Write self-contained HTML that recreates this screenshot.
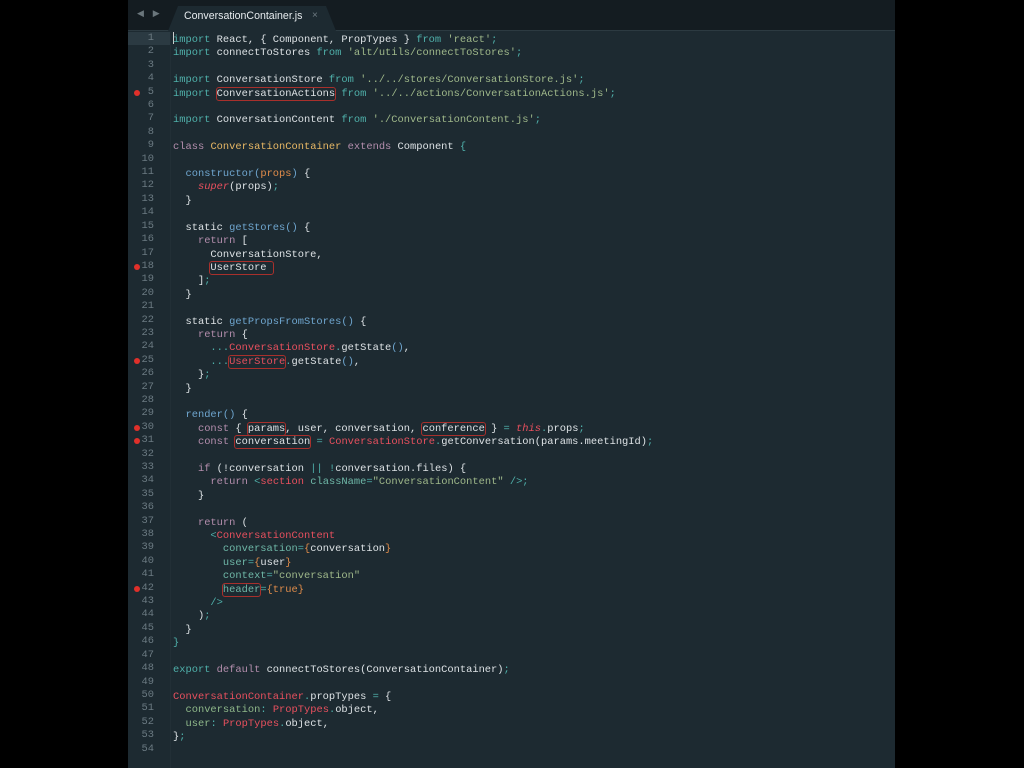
<!DOCTYPE html>
<html><head><meta charset="utf-8"><style>
html,body{margin:0;padding:0;background:#000;width:1024px;height:768px;overflow:hidden}
#ed{position:absolute;left:128px;top:0;width:767px;height:768px;background:#1d2a31}
#tabs{position:absolute;left:0;top:0;width:767px;height:30px;background:#141c21;border-bottom:1px solid #2c3a41}
#tabtitle{position:absolute;left:56px;top:10px;font:10.6px "Liberation Sans",sans-serif;color:#e6ebee}
#x{position:absolute;left:184px;top:10px;font:10px "Liberation Sans",sans-serif;color:#6f7c83}
#arr{position:absolute;left:9px;top:9px;font:9px "DejaVu Sans",sans-serif;color:#6a767c;letter-spacing:3px}
#gut{position:absolute;left:0;top:32px;width:26px;font:10.4px/13.4px "Liberation Mono",monospace;color:#6b7a82;text-align:right;white-space:pre}
#hl{position:absolute;left:0;top:31.5px;width:42px;height:13.4px;background:#2b3a42}
#sep{position:absolute;left:42px;top:31px;width:1px;height:737px;background:#222f36}
#code{position:absolute;left:45px;top:32px;font:10.4px/13.4px "Liberation Mono",monospace;color:#dde2e5;white-space:pre}
.dot{position:absolute;left:6px;width:6px;height:6px;border-radius:50%;background:#e0302a}
.k{color:#4fb0aa}.p{color:#b48ead}.s{color:#9fb88a}.r{color:#e8505e}.y{color:#e8b865}.b{color:#6fa6cf}.o{color:#e08c4a}.i{color:#e8505e;font-style:italic}.a{color:#6fb8a8}.g{color:#8fb88a}
.bx{outline:1px solid #a8302c;outline-offset:0;border-radius:2px}
.cur{display:inline-block;width:1px;height:12px;background:#ccc;vertical-align:-2px;margin-right:-1px}
</style></head><body>
<div id="ed">
<div id="tabs">
<div id="arr">◀ ▶</div>
<svg style="position:absolute;left:40px;top:5px" width="170" height="26"><polygon points="0,26 10,1 158,1 168,26" fill="#1d2a31"/></svg>
<div id="tabtitle">ConversationContainer.js</div>
<div id="x">×</div>
</div>
<div id="hl"></div>
<div id="sep"></div>
<div id="gut">1
2
3
4
5
6
7
8
9
10
11
12
13
14
15
16
17
18
19
20
21
22
23
24
25
26
27
28
29
30
31
32
33
34
35
36
37
38
39
40
41
42
43
44
45
46
47
48
49
50
51
52
53
54</div>
<div class="dot" style="top:90px"></div>
<div class="dot" style="top:264.2px"></div>
<div class="dot" style="top:358px"></div>
<div class="dot" style="top:425px"></div>
<div class="dot" style="top:438.4px"></div>
<div class="dot" style="top:585.8px"></div>
<div id="code"><span class="cur"></span><span class="k">import</span> React, { Component, PropTypes } <span class="k">from</span> <span class="s">'react'</span><span class="k">;</span>
<span class="k">import</span> connectToStores <span class="k">from</span> <span class="s">'alt/utils/connectToStores'</span><span class="k">;</span>

<span class="k">import</span> ConversationStore <span class="k">from</span> <span class="s">'../../stores/ConversationStore.js'</span><span class="k">;</span>
<span class="k">import</span> <span class="bx">ConversationActions</span> <span class="k">from</span> <span class="s">'../../actions/ConversationActions.js'</span><span class="k">;</span>

<span class="k">import</span> ConversationContent <span class="k">from</span> <span class="s">'./ConversationContent.js'</span><span class="k">;</span>

<span class="p">class</span> <span class="y">ConversationContainer</span> <span class="p">extends</span> Component <span class="k">{</span>

  <span class="b">constructor</span><span class="b">(</span><span class="o">props</span><span class="b">)</span> {
    <span class="i">super</span>(props)<span class="k">;</span>
  }

  static <span class="b">getStores</span><span class="b">()</span> {
    <span class="p">return</span> [
      ConversationStore,
      <span class="bx">UserStore </span>
    ]<span class="k">;</span>
  }

  static <span class="b">getPropsFromStores</span><span class="b">()</span> {
    <span class="p">return</span> {
      <span class="k">...</span><span class="r">ConversationStore</span><span class="k">.</span>getState<span class="b">()</span>,
      <span class="k">...</span><span class="r bx">UserStore</span><span class="k">.</span>getState<span class="b">()</span>,
    }<span class="k">;</span>
  }

  <span class="b">render</span><span class="b">()</span> {
    <span class="p">const</span> { <span class="bx">params</span>, user, conversation, <span class="bx">conference</span> } <span class="k">=</span> <span class="i">this</span><span class="k">.</span>props<span class="k">;</span>
    <span class="p">const</span> <span class="bx">conversation</span> <span class="k">=</span> <span class="r">ConversationStore</span><span class="k">.</span>getConversation(params.meetingId)<span class="k">;</span>

    <span class="p">if</span> (!conversation <span class="k">||</span> <span class="k">!</span>conversation.files) {
      <span class="p">return</span> <span class="k">&lt;</span><span class="r">section</span> <span class="a">className</span><span class="k">=</span><span class="s">"ConversationContent"</span> <span class="k">/&gt;;</span>
    }

    <span class="p">return</span> (
      <span class="k">&lt;</span><span class="r">ConversationContent</span>
        <span class="a">conversation</span><span class="k">=</span><span class="o">{</span>conversation<span class="o">}</span>
        <span class="a">user</span><span class="k">=</span><span class="o">{</span>user<span class="o">}</span>
        <span class="a">context</span><span class="k">=</span><span class="s">"conversation"</span>
        <span class="a bx">header</span><span class="k">=</span><span class="o">{true}</span>
      <span class="k">/&gt;</span>
    )<span class="k">;</span>
  }
<span class="k">}</span>

<span class="k">export</span> <span class="p">default</span> connectToStores(ConversationContainer)<span class="k">;</span>

<span class="r">ConversationContainer</span><span class="k">.</span>propTypes <span class="k">=</span> {
  <span class="g">conversation</span><span class="k">:</span> <span class="r">PropTypes</span><span class="k">.</span>object,
  <span class="g">user</span><span class="k">:</span> <span class="r">PropTypes</span><span class="k">.</span>object,
}<span class="k">;</span>
</div>
</div>
</body></html>
